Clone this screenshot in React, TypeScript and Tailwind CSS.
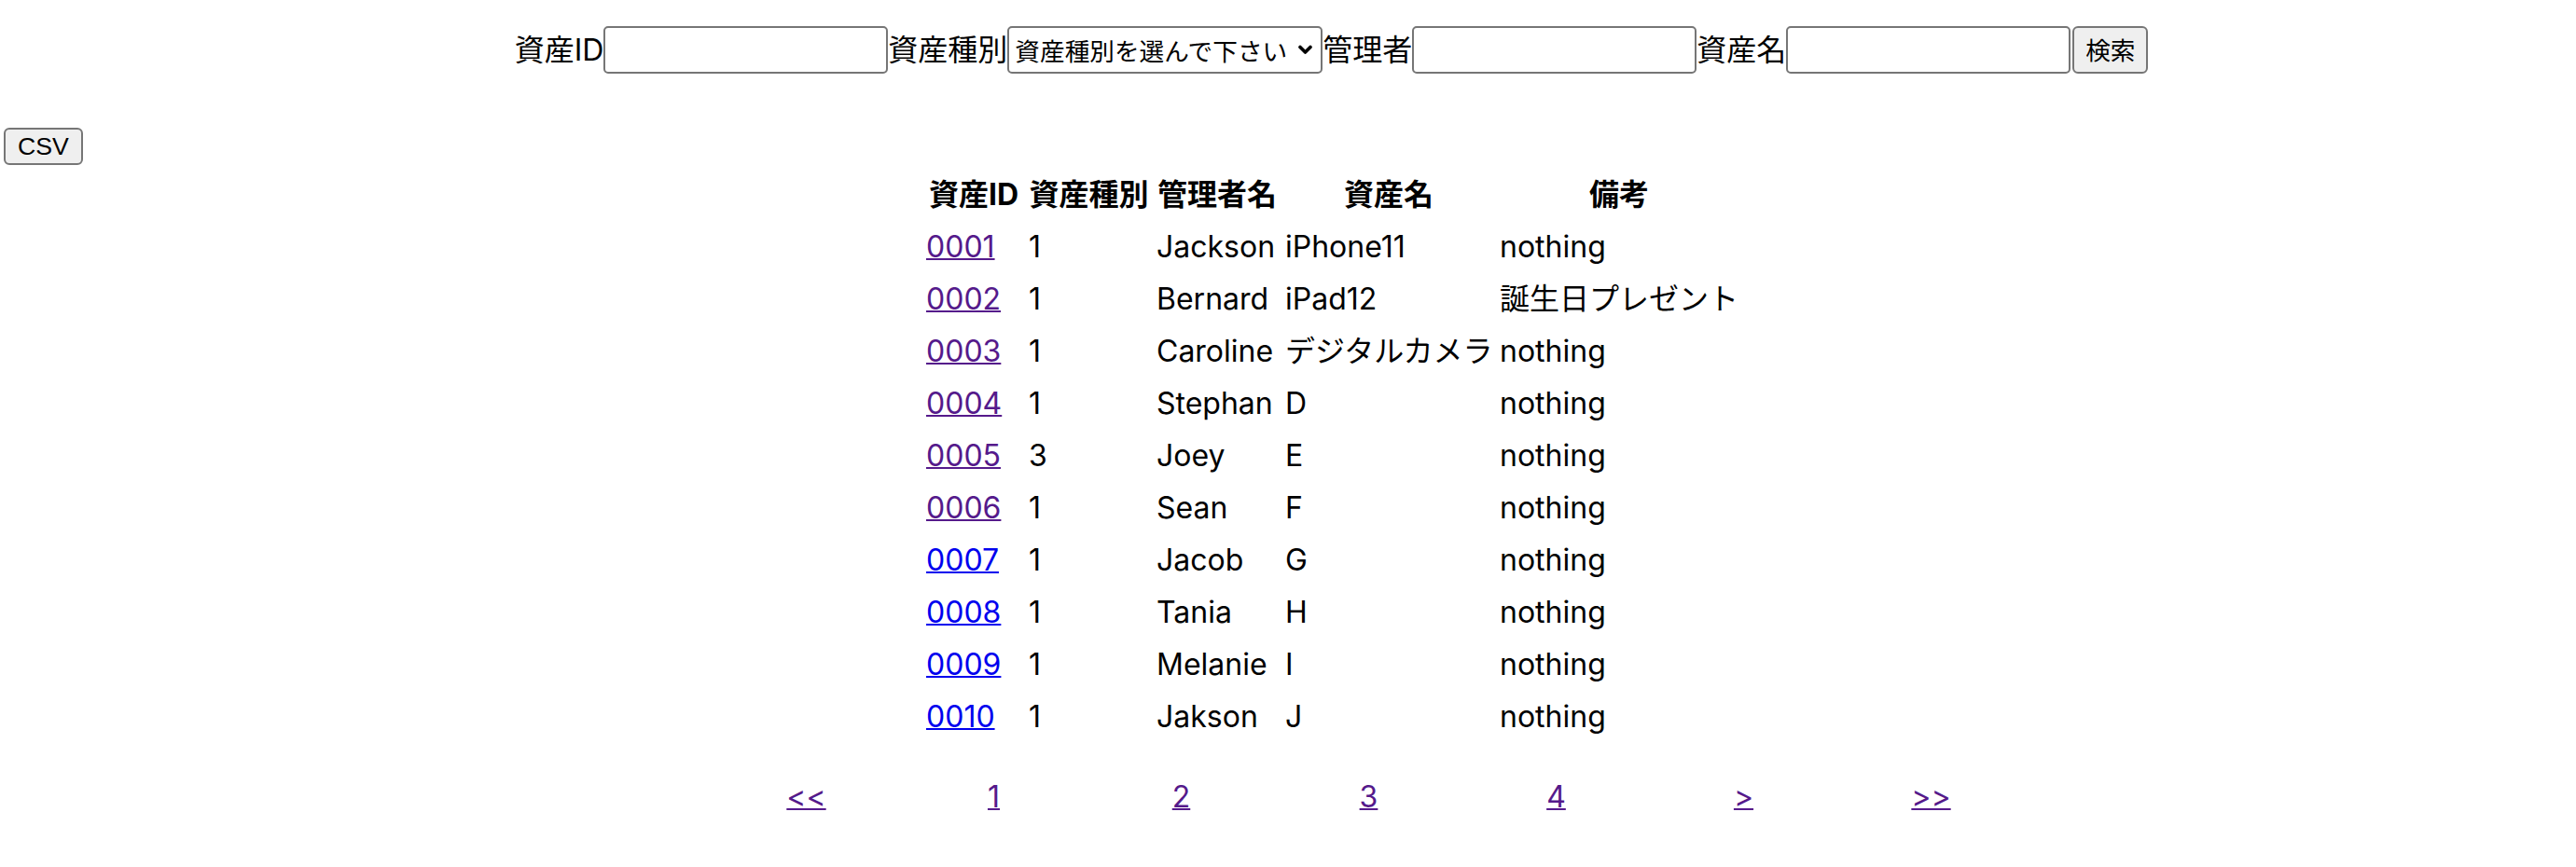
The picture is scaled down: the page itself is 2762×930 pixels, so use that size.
import React from 'react';

type Asset = {
  id: string;
  kind: string;
  owner: string;
  name: string;
  note: string;
  visited: boolean;
};

const assets: Asset[] = [
  { id: '0001', kind: '1', owner: 'Jackson', name: 'iPhone11', note: 'nothing', visited: true },
  { id: '0002', kind: '1', owner: 'Bernard', name: 'iPad12', note: '誕生日プレゼント', visited: true },
  { id: '0003', kind: '1', owner: 'Caroline', name: 'デジタルカメラ', note: 'nothing', visited: true },
  { id: '0004', kind: '1', owner: 'Stephan', name: 'D', note: 'nothing', visited: true },
  { id: '0005', kind: '3', owner: 'Joey', name: 'E', note: 'nothing', visited: true },
  { id: '0006', kind: '1', owner: 'Sean', name: 'F', note: 'nothing', visited: true },
  { id: '0007', kind: '1', owner: 'Jacob', name: 'G', note: 'nothing', visited: false },
  { id: '0008', kind: '1', owner: 'Tania', name: 'H', note: 'nothing', visited: false },
  { id: '0009', kind: '1', owner: 'Melanie', name: 'I', note: 'nothing', visited: false },
  { id: '0010', kind: '1', owner: 'Jakson', name: 'J', note: 'nothing', visited: false },
];

const pages = ['<<', '1', '2', '3', '4', '>', '>>'];

const FONT = "font-['Inter','Noto_Sans_CJK_JP',sans-serif]";

const inputCls =
  'w-[305px] h-[51px] border-2 border-[#767676] rounded-[5px] bg-white px-[4px] text-[26.67px] outline-none';

const App: React.FC = () => {
  return (
    <div className={`min-h-[930px] w-full bg-white text-black ${FONT}`}>
      {/* 検索フォーム */}
      <form className="flex items-center justify-center pt-[28px] pl-[93px] text-[32px] leading-[48px]" onSubmit={(e) => e.preventDefault()}>
        <label className="whitespace-nowrap">資産ID</label>
        <input type="text" className={inputCls} />
        <label className="whitespace-nowrap">資産種別</label>
        <div className="flex h-[51px] w-[338px] items-center border-2 border-[#767676] rounded-[5px] bg-white pr-[9px]">
          <select className="h-full flex-1 appearance-none bg-transparent pl-[6px] font-['Noto_Sans_CJK_JP',sans-serif] text-[26.67px] outline-none">
            <option>資産種別を選んで下さい</option>
            <option>1</option>
            <option>2</option>
            <option>3</option>
          </select>
          <svg width="15" height="11" viewBox="0 0 15 11" fill="none">
            <path d="M2 2.5 L7.5 8 L13 2.5" stroke="#000" strokeWidth="3.6" strokeLinecap="round" strokeLinejoin="round" />
          </svg>
        </div>
        <label className="whitespace-nowrap">管理者</label>
        <input type="text" className={inputCls} />
        <label className="whitespace-nowrap">資産名</label>
        <input type="text" className={inputCls} />
        <button type="submit" className="ml-[2px] h-[51px] w-[81px] border-2 border-[#767676] rounded-[6px] bg-[#efefef] font-['Noto_Sans_CJK_JP',sans-serif] text-[26.67px] leading-none">
          検索
        </button>
      </form>

      {/* CSV出力 */}
      <div className="mt-[58px] pl-[4px]">
        <button className="h-[40px] w-[85px] border-2 border-[#767676] rounded-[6px] bg-[#efefef] font-['Liberation_Sans',sans-serif] text-[26.67px] leading-none">
          CSV
        </button>
      </div>

      {/* 一覧 */}
      <div className="flex justify-center pl-[95px]">
        <table className="w-[883px] table-fixed border-separate border-spacing-1 text-[32px] leading-[48px]">
          <thead>
            <tr>
              <th className="w-[106px] px-[2px] pt-[4px] pb-0 text-center font-bold">資産ID</th>
              <th className="w-[133px] px-[2px] pt-[4px] pb-0 text-center font-bold">資産種別</th>
              <th className="w-[134px] px-[2px] pt-[4px] pb-0 text-center font-bold">管理者名</th>
              <th className="w-[226px] px-[2px] pt-[4px] pb-0 text-center font-bold">資産名</th>
              <th className="w-[260px] px-[2px] pt-[4px] pb-0 text-center font-bold">備考</th>
            </tr>
          </thead>
          <tbody>
            {assets.map((a) => (
              <tr key={a.id}>
                <td className="px-[2px] pt-[4px] pb-0 whitespace-nowrap">
                  <a
                    href="#"
                    className={`underline decoration-[2px] ${a.visited ? 'text-[#551a8b]' : 'text-[#0000ee]'}`}
                  >
                    {a.id}
                  </a>
                </td>
                <td className="px-[2px] pt-[4px] pb-0 whitespace-nowrap">{a.kind}</td>
                <td className="px-[2px] pt-[4px] pb-0 whitespace-nowrap">{a.owner}</td>
                <td className="px-[2px] pt-[4px] pb-0 whitespace-nowrap">{a.name}</td>
                <td className="px-[2px] pt-[4px] pb-0 whitespace-nowrap">{a.note}</td>
              </tr>
            ))}
          </tbody>
        </table>
      </div>

      {/* ページング */}
      <nav className="mt-[34px] flex justify-center pl-[173px] text-[32px] leading-[48px]">
        {pages.map((p) => (
          <div key={p} className="w-[201px] text-center">
            <a href="#" className="text-[#551a8b] underline decoration-[2px]">
              {p}
            </a>
          </div>
        ))}
      </nav>
    </div>
  );
};

export default App;
